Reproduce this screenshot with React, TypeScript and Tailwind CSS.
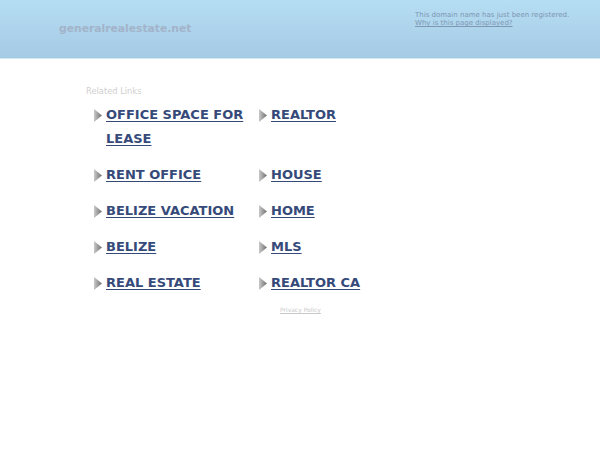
const links: [string, string][] = [
  ["OFFICE SPACE FOR LEASE", "REALTOR"],
  ["RENT OFFICE", "HOUSE"],
  ["BELIZE VACATION", "HOME"],
  ["BELIZE", "MLS"],
  ["REAL ESTATE", "REALTOR CA"],
];

function Arrow() {
  return (
    <svg width="8" height="13" viewBox="0 0 8 13" className="mt-[6px] shrink-0">
      <defs>
        <linearGradient id="arr" x1="0" y1="0" x2="1" y2="0">
          <stop offset="0" stopColor="#c9c9c9" />
          <stop offset="1" stopColor="#6f6f6f" />
        </linearGradient>
      </defs>
      <path d="M0 0 L8 6.5 L0 13 Z" fill="url(#arr)" />
    </svg>
  );
}

function LinkItem({ label }: { label: string }) {
  return (
    <div className="flex items-start gap-[4px]">
      <Arrow />
      <a href="#" className="text-[13px] leading-[24px] font-bold text-[#364a7a] underline underline-offset-[2px] decoration-[1px]">
        {label}
      </a>
    </div>
  );
}

export default function App() {
  return (
    <div className="min-h-[450px] bg-white font-['DejaVu_Sans',sans-serif]">
      {/* Header */}
      <header className="h-[59px] bg-gradient-to-b from-[#b5ddf3] to-[#a5cbe4] border-b border-[#d3e9f5] flex">
        <div className="pl-[59px] w-[415px] flex items-center">
          <span className="text-[10.75px] font-bold text-[#a3b3ca]">generalrealestate.net</span>
        </div>
        <div className="pt-[11px] text-[7px] leading-[8px] text-[#7f97b3]">
          <p>This domain name has just been registered.</p>
          <a href="#" className="underline">Why is this page displayed?</a>
        </div>
      </header>

      {/* Related links */}
      <div className="pl-[86px] pt-[27px]">
        <p className="text-[8.3px] leading-[10px] text-[#cfcfcf]">Related Links</p>
        <div className="pl-[8px] mt-[7px] grid grid-cols-[165px_165px] gap-y-[12px]">
          {links.map(([a, b]) => (
            <>
              <div key={a}>
                <LinkItem label={a} />
              </div>
              <div key={b}>
                <LinkItem label={b} />
              </div>
            </>
          ))}
        </div>
        <div className="pl-[194px] mt-[8px] leading-[8px]">
          <a href="#" className="text-[6px] leading-[8px] text-[#c8c8c8] underline">Privacy Policy</a>
        </div>
      </div>
    </div>
  );
}
